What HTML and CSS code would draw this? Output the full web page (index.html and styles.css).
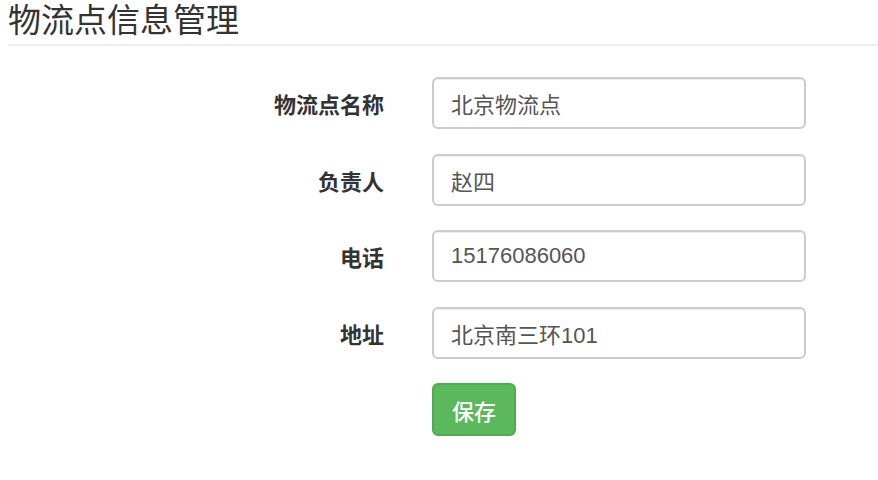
FILE: index.html
```html
<!DOCTYPE html>
<html lang="zh-CN">
  <head>
    <meta charset="UTF-8" />
    <meta name="viewport" content="width=device-width, initial-scale=1.0" />
    <title>物流点信息管理</title>
    <link rel="stylesheet" href="styles.css">
  </head>
  <body>
    <div class="page">
      <h1 class="page-header">物流点信息管理</h1>
      <form class="site-form" id="siteForm">
        <label class="control-label" for="name">物流点名称</label>
        <input class="form-control" type="text" id="name" value="北京物流点" />

        <label class="control-label" for="manager">负责人</label>
        <input class="form-control" type="text" id="manager" value="赵四" />

        <label class="control-label" for="phone">电话</label>
        <input class="form-control" type="text" id="phone" value="15176086060" />

        <label class="control-label" for="address">地址</label>
        <input class="form-control" type="text" id="address" value="北京南三环101" />

        <div class="form-actions">
          <button type="submit" class="btn-save">保存</button>
        </div>
      </form>
    </div>
  </body>
</html>
```

FILE: styles.css
```css
/* page styles */
body {
  margin: 0;
  padding: 0;
  background-color: #fff;
  color: #333;
  font-family: "Liberation Sans", Arial, "Noto Sans CJK SC", sans-serif;
}

.page {
  padding: 0 0 0 8px;
}

.page-header {
  margin: 0;
  padding: 3px 0 5px;
  font-size: 33px;
  font-weight: normal;
  line-height: 1.1;
  border-bottom: 2px solid #eee;
}

.site-form {
  display: grid;
  grid-template-columns: 376px 374px;
  column-gap: 48px;
  row-gap: 24.5px;
  align-items: center;
  margin-top: 31px;
}

.control-label {
  text-align: right;
  font-size: 22px;
  font-weight: bold;
}

.form-control {
  box-sizing: border-box;
  height: 52px;
  width: 100%;
  padding: 0 17px;
  font-family: inherit;
  font-size: 22px;
  color: #555;
  border: 2px solid #ccc;
  border-radius: 6px;
  box-shadow: inset 0 1px 1px rgba(0, 0, 0, 0.075);
}

.form-actions {
  grid-column: 2;
}

.btn-save {
  box-sizing: border-box;
  height: 53px;
  width: 84px;
  padding: 0;
  font-family: inherit;
  font-size: 22px;
  font-weight: 500;
  color: #fff;
  background-color: #5cb85c;
  border: 2px solid #4cae4c;
  border-radius: 6px;
  cursor: pointer;
}

.btn-save:hover {
  background-color: #449d44;
}
```
